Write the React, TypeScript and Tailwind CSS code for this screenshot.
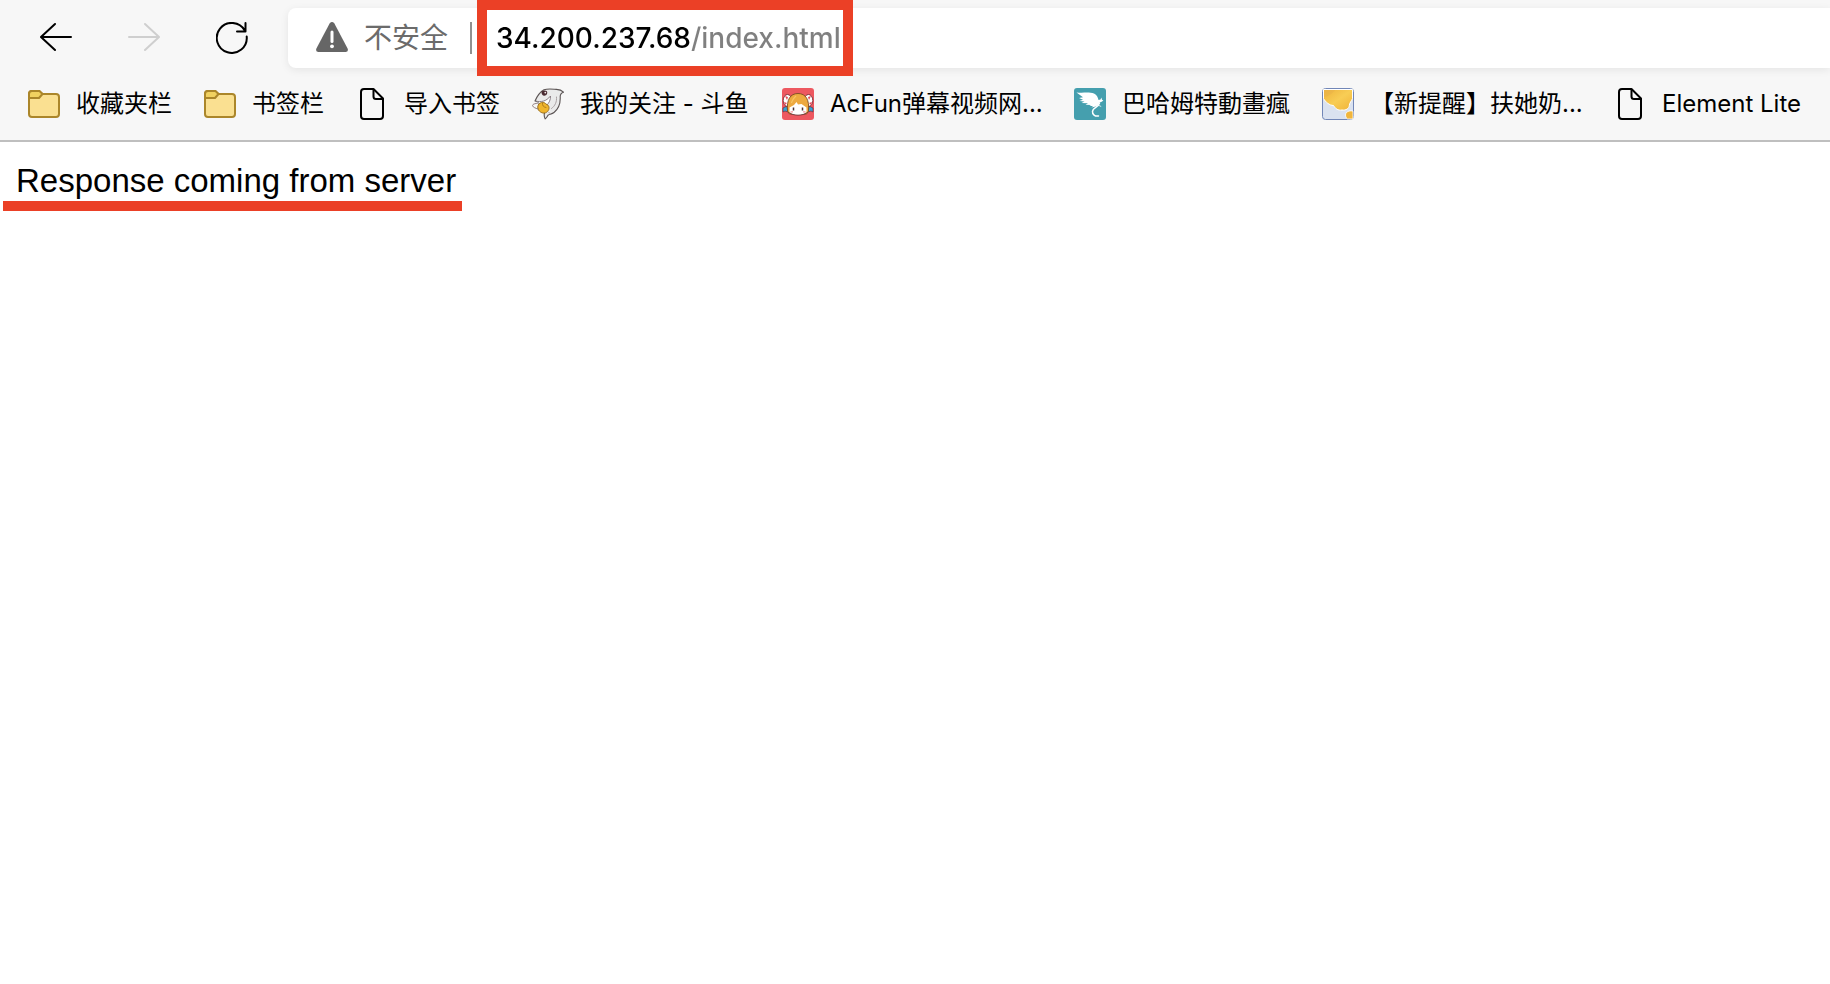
import type { ReactNode } from "react";

function BackIcon() {
  return (
    <svg viewBox="0 0 32 32" className="h-8 w-8" fill="none" stroke="currentColor" strokeWidth="2" strokeLinecap="round" strokeLinejoin="round">
      <path d="M31 15H1.5M15 2 1 15l14 13" />
    </svg>
  );
}

function ForwardIcon() {
  return (
    <svg viewBox="0 0 32 32" className="h-8 w-8" fill="none" stroke="currentColor" strokeWidth="2" strokeLinecap="round" strokeLinejoin="round">
      <path d="M1 15h29.500M17 2l14 13-14 13" />
    </svg>
  );
}

function ReloadIcon() {
  return (
    <svg viewBox="0 0 32 32" className="h-8 w-8" fill="none" stroke="currentColor" strokeWidth="2" strokeLinecap="round" strokeLinejoin="round">
      <path d="M30.700 14.500A15 15 0 1 1 28.800 8.500M29.500 1v8.500H21" />
    </svg>
  );
}

function WarningIcon() {
  return (
    <svg viewBox="0 0 32 32" className="h-8 w-8 shrink-0">
      <path d="M13.600 1.500Q16-1.300 18.400 1.500L31.600 26.500Q32.800 30 29.500 30H2.500Q-.8 30 .4 26.500Z" fill="#666" />
      <path d="M16 10v9.500" stroke="#fff" strokeWidth="3" strokeLinecap="round" />
      <circle cx="16" cy="24.300" r="1.900" fill="#fff" />
    </svg>
  );
}

function FolderIcon() {
  return (
    <svg viewBox="0 0 32 32" className="h-8 w-8 shrink-0" stroke="#ab862a" strokeWidth="2" strokeLinejoin="round">
      <path d="M1 6a3 3 0 0 1 3-3h7l3.500 3H28a3 3 0 0 1 3 3v17a3 3 0 0 1-3 3H4a3 3 0 0 1-3-3Z" fill="#fae091" />
      <path d="M1 10V6a3 3 0 0 1 3-3h7.500l3 3-3.500 4Z" fill="#f1d160" />
    </svg>
  );
}

function PageIcon() {
  return (
    <svg viewBox="0 0 32 32" className="h-8 w-8 shrink-0" fill="none" stroke="#000" strokeWidth="2" strokeLinejoin="round">
      <path d="M8 1h9.500L27 10.500V28a3 3 0 0 1-3 3H8a3 3 0 0 1-3-3V4a3 3 0 0 1 3-3Z" />
      <path d="M17.500 1v7.500a2.500 2.500 0 0 0 2.500 2.500h7" />
    </svg>
  );
}

function SharkIcon() {
  return (
    <svg viewBox="0 0 32 32" className="h-8 w-8 shrink-0" strokeLinecap="round" strokeLinejoin="round">
      <path d="M3 13C5 8.500 8 4 12 1.800c4-1.500 9-.6 12.500-.4 2.500.1 5 .8 7 2.800-1.800.6-3.300 1.800-3.300 4.300C28.600 15 26.500 21 22 24.500c-2 1.500-4 1.600-5.600 2.400-1 .9-1.600 2.900-3.200 4-.9-1.700-1.400-4-.6-6.400L7 19.500 8 15c-1.500-1-3.300-1.500-5-2Z" fill="#eaeaea" stroke="#5b5454" strokeWidth="1.100" />
      <path d="M4 13.200c5 1 10 .5 14.500-5.200.5 4.500-2 8-5 10l5 6c-3-1-6-3-7-6l-3-2.500Z" fill="#fff" />
      <path d="M4 13.200c5 1 10 .5 14.500-5.200.2 3.700-1.300 6.800-3.500 9" fill="none" stroke="#80747a" strokeWidth=".9" />
      <path d="M9.500 3.500c2-1.500 4.500-1.500 5.500 0 .8 2-.5 4.200-2.500 4.200-2 .1-3.200-1.600-3-4.200Z" fill="#4a2a31" />
      <circle cx="13.300" cy="4.600" r=".9" fill="#f4eeee" />
      <path d="M6.500 16.500c2.500-3 6-2.600 7.500-.4 3 .8 3.700 3.900 2.400 6.200-1.800 3.300-6 3.700-8.800 1-2-1.500-2.500-4.800-1.100-6.800Z" fill="#efb52c" stroke="#9b701f" />
      <path d="M10.500 15c-.4 2.500.8 4 3.500 4.500" fill="none" stroke="#a8741b" strokeWidth=".9" />
      <path d="M6.500 15.200c-4.500.2-6.500 1.400-5.800 2.800.4 1.100 2.500 2.200 5.300 3" fill="none" stroke="#837071" strokeWidth=".9" />
      <path d="M24.500 9c.5 5-1.500 9-5 11.500M16.500 24l2 2" fill="none" stroke="#a39a9c" strokeWidth=".9" />
    </svg>
  );
}

function AcFunIcon() {
  return (
    <svg viewBox="0 0 32 32" className="h-8 w-8 shrink-0">
      <rect width="32" height="32" rx="3" fill="#ed5860" />
      <path d="M1 20l4-2 1 6-3-1-2 1ZM31 20l-4-2-1 6 3-1 2 1Z" fill="#35a4d7" stroke="#6b3440" strokeWidth=".7" />
      <ellipse cx="5.500" cy="12.500" rx="4.300" ry="6" fill="#fff" stroke="#762b35" strokeWidth=".9" />
      <ellipse cx="26.500" cy="12.500" rx="4.300" ry="6" fill="#fff" stroke="#762b35" strokeWidth=".9" />
      <path d="M3 8l3 1-1 3ZM2 14l3 1-2 2ZM29 8l-3 1 1 3ZM30 14l-3 1 2 2Z" fill="#e64856" />
      <path d="M5.500 23C4.500 12 8 5.500 16 5.500S27.500 12 26.500 23l-2 3h-17Z" fill="#eda940" stroke="#7b4b22" strokeWidth=".9" />
      <path d="M7.500 19.500l4.500-2.500 2.500-3 1.500 2.500 3.500-.5 5 3.500V24c-2 4-15 4-17 0Z" fill="#fff" />
      <path d="M11.500 19.500v3M20.500 19.500v3" stroke="#4b3537" strokeWidth="1.500" />
      <path d="M8.500 23.800h2.500M21 23.800h2.500" stroke="#f29ba0" strokeWidth="1.300" />
      <path d="M7.500 24.500c2.500 3.500 14.500 3.500 17 0" fill="none" stroke="#5b3032" strokeWidth=".8" />
      <path d="M14 8c-2 2-4 4-4.500 7" fill="none" stroke="#f7c663" strokeWidth="1.200" />
    </svg>
  );
}

function DragonIcon() {
  return (
    <svg viewBox="0 0 32 32" className="h-8 w-8 shrink-0">
      <rect width="32" height="32" rx="3" fill="#459fae" />
      <path d="M2.500 4.500c7 .6 13-.6 17.500 1 3 1.200 3.800 3.800 4.500 6.500l2-.4.9-2.100.6 2.200 1.400.7-1.700 1.400-2.200.8c-1 2.700-3 3.800-4.700 4.100l-3.300.8 1.500-1.500-3.500.1 1.500-1.200-5.500-.2 2.500-1.500-6.500-.2 3-1.500-5-.5 3.500-1.200L5 10l4-.8Z" fill="#fff" />
      <path d="M25.500 15c-1.500 5-6.500 4.500-7 8.300-.3 3.200 2.500 5.300 6 4.700" fill="none" stroke="#fff" strokeWidth="1.500" strokeLinecap="round" />
      <path d="m24 17 3.200 1.500" stroke="#fff" strokeWidth=".8" />
    </svg>
  );
}

function HoneyIcon() {
  return (
    <svg viewBox="0 0 32 32" className="h-8 w-8 shrink-0">
      <defs>
        <linearGradient id="honey" x1="0" y1="0" x2="1" y2="1">
          <stop offset="0" stopColor="#edb23c" />
          <stop offset=".5" stopColor="#f8cd55" />
          <stop offset="1" stopColor="#f0b239" />
        </linearGradient>
      </defs>
      <rect x=".5" y=".5" width="31" height="31" rx="3" fill="#dae2f0" stroke="#7186b7" />
      <path d="M1.500 1.500h29v9c-1 3-3 4-3.200 7-.3 3.200-3.300 5-7.300 4.500-4.500.7-6.500-1.500-8.500-4.500C7.500 17.500 3.500 14 1.500 10.500Z" fill="url(#honey)" stroke="#fff" />
      <path d="M2 2h11c-2 3-6 6-11 7Z" fill="#eab24a" opacity=".6" />
      <path d="M31 23.200c-3.500-1-7.500.5-7.500 3.800 0 1.700.8 3 2 4H31Z" fill="#f0b53c" stroke="#fff" strokeWidth=".8" />
    </svg>
  );
}

const bookmarks: { label: string; icon: ReactNode; width: string }[] = [
  { label: "收藏夹栏", icon: <FolderIcon />, width: "w-[96px]" },
  { label: "书签栏", icon: <FolderIcon />, width: "w-[72px]" },
  { label: "导入书签", icon: <PageIcon />, width: "w-[96px]" },
  { label: "我的关注 - 斗鱼", icon: <SharkIcon />, width: "w-[170px]" },
  { label: "AcFun弹幕视频网...", icon: <AcFunIcon />, width: "w-[212px]" },
  { label: "巴哈姆特動畫瘋", icon: <DragonIcon />, width: "w-[168px]" },
  { label: "【新提醒】扶她奶...", icon: <HoneyIcon />, width: "w-[212px]" },
  { label: "Element Lite", icon: <PageIcon />, width: "w-[144px]" },
];

export default function App() {
  return (
    <div className="min-h-screen overflow-x-hidden bg-white font-['Inter','Noto_Sans_CJK_SC',sans-serif] text-black">
      <header className="border-b-2 border-[#bfbfbf] bg-[#f7f7f7]">
        <div className="flex items-center pt-2 pl-10">
          <nav aria-label="History" className="flex items-center gap-14">
            <button type="button" aria-label="Back"><BackIcon /></button>
            <button type="button" aria-label="Forward" disabled className="text-[#cfcfcf]"><ForwardIcon /></button>
            <button type="button" aria-label="Reload"><ReloadIcon /></button>
          </nav>
          <div className="ml-10 flex h-[60px] flex-1 items-center rounded-l-lg bg-white pl-7 text-[28px] shadow-[0_2px_8px_rgba(0,0,0,0.08)]">
            <button type="button" className="flex items-center gap-4 whitespace-nowrap text-[#6b6b6b]">
              <WarningIcon />
              <span className="leading-8">不安全</span>
            </button>
            <span className="ml-[22px] h-8 w-[2px] bg-[#919191]" />
            <div className="relative ml-6 flex-1">
              <input
                type="text"
                aria-label="Address"
                defaultValue="34.200.237.68/index.html"
                className="block w-full bg-[linear-gradient(to_right,#000_194px,#808080_194px)] bg-clip-text leading-8 font-medium text-transparent caret-black outline-none"
              />
              <span className="pointer-events-none absolute -top-[22px] -left-[19px] h-[76px] w-[376px] border-[10px] border-[#eb4026]" />
            </div>
          </div>
        </div>
        <nav aria-label="Bookmarks" className="flex h-[72px] items-center gap-8 pl-7 text-[24px]">
          {bookmarks.map((bookmark) => (
            <a key={bookmark.label} href="#" className="flex shrink-0 items-center gap-4">
              {bookmark.icon}
              <span className={`${bookmark.width} leading-8 whitespace-nowrap`}>{bookmark.label}</span>
            </a>
          ))}
        </nav>
      </header>
      <main className="p-4">
        <p className="relative w-fit font-['Liberation_Sans',sans-serif] text-[33px] leading-[46px]">
          Response coming from server
          <span className="pointer-events-none absolute top-[43px] -left-[13px] h-[10px] w-[459px] bg-[#eb4026]" />
        </p>
      </main>
    </div>
  );
}
